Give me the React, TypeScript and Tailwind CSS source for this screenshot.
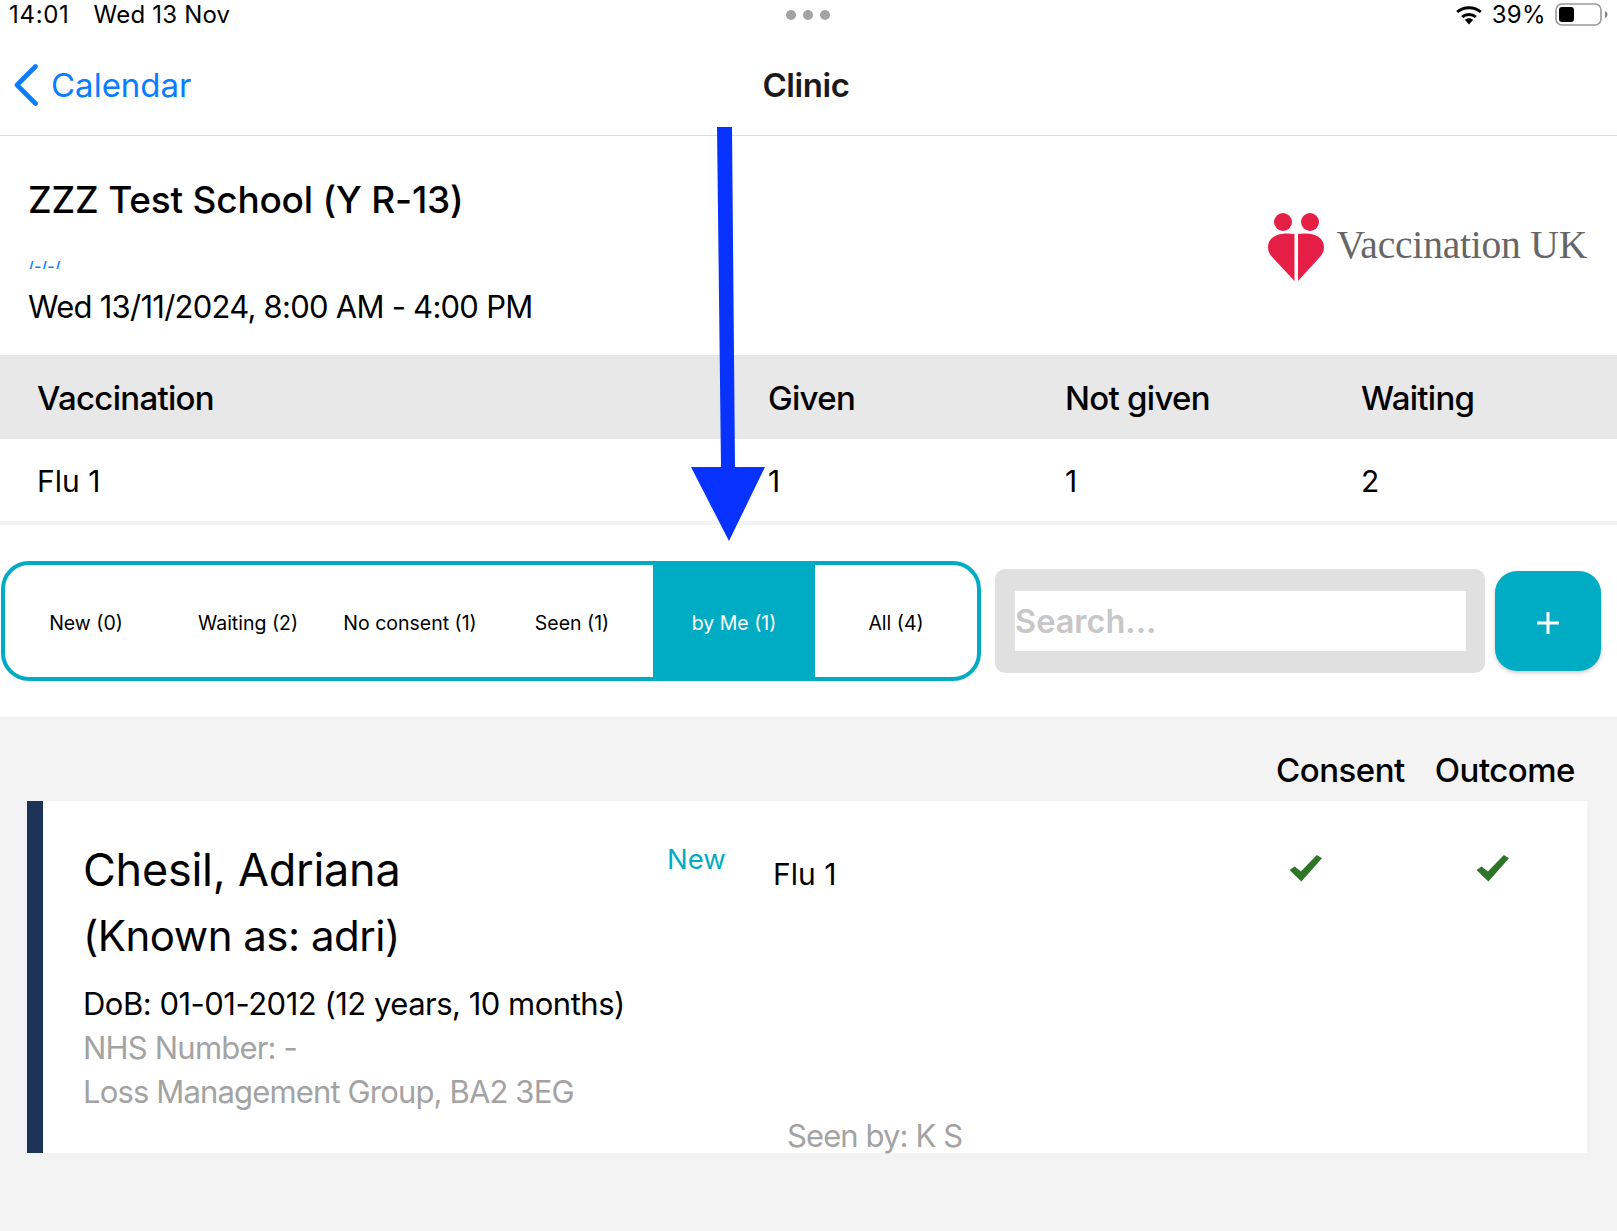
import React from "react";

const tabs = ["New (0)", "Waiting (2)", "No consent (1)", "Seen (1)", "by Me (1)", "All (4)"];

function Check({ className }: { className: string }) {
  return (
    <svg viewBox="0 0 32 27" className={className}>
      <path d="M0.5 15.5 L5.5 12 L11.5 17 L27 0.8 L32 4 L12 26.5 Z" fill="#2e7528" strokeLinejoin="round" />
    </svg>
  );
}

export default function App() {
  return (
    <div className="relative w-[1617px] h-[1231px] overflow-hidden bg-white text-black font-['Inter',sans-serif]">
      {/* status bar */}
      <div className="h-[30px] flex items-center justify-between pl-[9px] pr-[8px] text-[24px] leading-[30px] tracking-[0.35px]">
        <div className="flex gap-[24px]">
          <span className="tracking-[0.7px]">14:01</span>
          <span className="tracking-[0.2px]">Wed 13 Nov</span>
        </div>
        <div className="flex gap-[7px] absolute left-[786px] top-[10px]">
          <span className="w-[10px] h-[10px] rounded-full bg-[#a3a3a3]"></span>
          <span className="w-[10px] h-[10px] rounded-full bg-[#a3a3a3]"></span>
          <span className="w-[10px] h-[10px] rounded-full bg-[#a3a3a3]"></span>
        </div>
        <div className="flex items-center gap-[9px]">
          <svg viewBox="0 0 28 20" className="w-[28px] h-[20px]">
            <path d="M14 19.5 L9.8 14.8 C12.2 12.7 15.8 12.7 18.2 14.8 Z" fill="#000" />
            <path d="M7.2 12 C10.9 8.6 17.1 8.6 20.8 12" fill="none" stroke="#000" strokeWidth="3" />
            <path d="M2.2 7 C8.5 1.2 19.5 1.2 25.8 7" fill="none" stroke="#000" strokeWidth="3" />
          </svg>
          <span>39%</span>
          <svg viewBox="0 0 54 24" className="w-[54px] h-[24px]">
            <rect x="1" y="1" width="45" height="21" rx="6" fill="none" stroke="#999" strokeWidth="1.6" />
            <rect x="4" y="4" width="15" height="15" rx="3" fill="#000" />
            <path d="M50 8 C52 9 52.5 10 52.5 11.5 C52.5 13 52 14 50 15 Z" fill="#888" />
          </svg>
        </div>
      </div>

      {/* nav bar */}
      <div className="relative h-[106px] border-b border-[#dcdcdc] flex items-center justify-center">
        <div className="absolute left-[14px] top-[34px] flex items-center gap-[13px]">
          <svg viewBox="0 0 24 42" className="w-[24px] h-[42px]">
            <path d="M21.5 2.5 L3 21 L21.5 39.5" fill="none" stroke="#0a7cff" strokeWidth="4.6" strokeLinecap="round" strokeLinejoin="round" />
          </svg>
          <span className="text-[33px] leading-[40px] text-[#0a7cff]">Calendar</span>
        </div>
        <span className="mt-[4px] -ml-[5px] text-[33px] leading-[40px] font-semibold text-[#1a1a1a] tracking-[-0.4px]">Clinic</span>
      </div>

      {/* school header */}
      <div className="h-[219px] flex items-start justify-between pl-[28px] pr-[30px]">
        <div className="pt-[41px]">
          <div className="text-[37px] leading-[46px] font-medium tracking-[-0.2px]">ZZZ Test School (Y R-13)</div>
          <div className="mt-[38px] h-[8px] text-[16px] leading-[10px] font-medium text-[#0a7cff] overflow-hidden">/-/-/</div>
          <div className="mt-[18px] text-[31px] leading-[40px] tracking-[-0.75px]">Wed 13/11/2024, 8:00 AM - 4:00 PM</div>
        </div>
        <div className="flex items-center gap-[12px] pt-[77px]">
          <svg viewBox="0 0 56 68" className="w-[56px] h-[68px]">
            <circle cx="15" cy="9" r="9" fill="#e61f47" />
            <circle cx="42" cy="9" r="9" fill="#e61f47" />
            <path d="M26.5 21 C14 19 0 22 0 34 C0 39 2 42 5 45 L26.5 68 Z" fill="#e61f47" />
            <path d="M30 21 C42 19 56 22 56 34 C56 39 54 42 51 45 L30 68 Z" fill="#e61f47" />
          </svg>
          <span className="mb-[4px] font-['Liberation_Serif',serif] text-[39.5px] leading-[50px] text-[#666] tracking-[-0.2px]">Vaccination UK</span>
        </div>
      </div>

      {/* table */}
      <div className="h-[84px] pt-[4px] bg-[#e8e8e8] grid grid-cols-[731px_297px_296px_1fr] items-center pl-[37px] text-[33px] font-medium tracking-[-0.7px]">
        <span>Vaccination</span>
        <span>Given</span>
        <span>Not given</span>
        <span>Waiting</span>
      </div>
      <div className="h-[86px] pt-[2px] border-b-[4px] border-[#f3f3f3] grid grid-cols-[731px_297px_296px_1fr] items-center pl-[37px] text-[30px]">
        <span>Flu 1</span>
        <span>1</span>
        <span>1</span>
        <span>2</span>
      </div>

      {/* filter row */}
      <div className="h-[192px] flex items-center pl-[1px] pr-[16px]">
        <div className="w-[980px] h-[120px] border-[4px] border-[#00acc4] rounded-[28px] overflow-hidden flex">
          {tabs.map((t) => (
            <div
              key={t}
              className={
                t === "by Me (1)"
                  ? "flex-1 flex items-center justify-center pt-[6px] text-[19.5px] bg-[#00acc4] text-white"
                  : "flex-1 flex items-center justify-center pt-[6px] text-[19.5px] text-black"
              }
            >
              {t}
            </div>
          ))}
        </div>
        <div className="ml-[14px] w-[490px] h-[104px] bg-[#e0e0e0] rounded-[10px] flex items-center pl-[20px]">
          <div className="w-[451px] h-[60px] pt-[3px] bg-white flex items-center text-[32.5px] font-semibold text-[#c7c7c7]">Search...</div>
        </div>
        <div className="ml-[10px] w-[106px] h-[100px] bg-[#00acc4] rounded-[22px] shadow-[0_2px_4px_rgba(0,0,0,0.2)] flex items-center justify-center">
          <svg viewBox="0 0 22 22" className="w-[22px] h-[22px] mt-[4px]">
            <path d="M11 0 V22 M0 11 H22" stroke="#fff" strokeWidth="3" />
          </svg>
        </div>
      </div>

      {/* list */}
      <div className="h-[514px] bg-[#f3f3f3] pl-[27px] pr-[30px]">
        <div className="h-[84px] flex items-center justify-end pr-[12px] pt-[24px] text-[33px] font-medium tracking-[-0.5px] gap-[30px]">
          <span>Consent</span>
          <span>Outcome</span>
        </div>
        <div className="relative h-[352px] bg-white border-l-[16px] border-[#1c3259] flex">
          <div className="w-[624px] pl-[40px] pt-[36px]">
            <div className="text-[45px] leading-[66px] tracking-[-0.25px]">Chesil, Adriana</div>
            <div className="text-[42px] leading-[66px] tracking-[-0.5px]">(Known as: adri)</div>
            <div className="mt-[13px] text-[31px] leading-[44px] tracking-[-0.5px]">DoB: 01-01-2012 (12 years, 10 months)</div>
            <div className="text-[31px] leading-[44px] tracking-[-0.8px] text-[#a3a3a3]">NHS Number: -</div>
            <div className="text-[31px] leading-[44px] tracking-[-0.85px] text-[#a3a3a3]">Loss Management Group, BA2 3EG</div>
          </div>
          <div className="w-[106px] pt-[40px] text-[27.5px] leading-[36px] text-[#00acc4]">New</div>
          <div className="flex-1 pt-[53px] text-[30px] leading-[40px]">Flu 1</div>
          <Check className="absolute left-[1246px] top-[53px] w-[33px] h-[28px]" />
          <Check className="absolute left-[1433px] top-[53px] w-[33px] h-[28px]" />
          <div className="absolute left-[744px] top-[313px] text-[31px] leading-[44px] tracking-[-0.9px] text-[#a3a3a3]">Seen by: K S</div>
        </div>
      </div>

      {/* blue annotation arrow */}
      <svg viewBox="0 0 1617 1231" className="absolute inset-0 w-[1617px] h-[1231px] pointer-events-none">
        <path d="M717 127 H732 L735 467 H765 L729 541 L691 467 H721 Z" fill="#0832ff" />
      </svg>
    </div>
  );
}
